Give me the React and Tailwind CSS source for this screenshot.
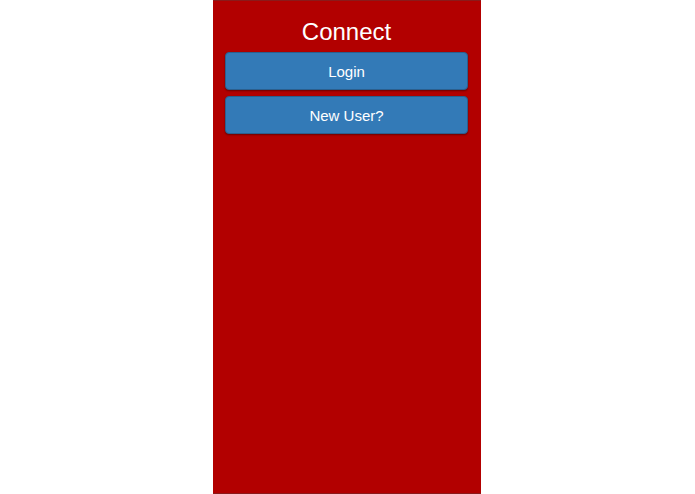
import React from 'react';

const App = () => {
    return (
        <div className="flex w-full h-[494px] bg-white font-['Liberation_Sans',Arial,sans-serif]">
            <div className="ml-[213px] w-[268px] h-full bg-[#b20000] border-t border-b border-[#8a1a1a] flex flex-col pl-3 pr-[13px]">
                <h1 className="text-white text-[24px] leading-none text-center mt-[19px] mb-[8px]">Connect</h1>
                <button className="h-[38px] w-full rounded-[4px] bg-[#337ab7] border border-[#2b5f8e] text-white text-[15px] pt-[2px] shadow-[0_1px_2px_rgba(0,0,0,0.4)]">
                    Login
                </button>
                <button className="mt-[6px] h-[38px] w-full rounded-[4px] bg-[#337ab7] border border-[#2b5f8e] text-white text-[15px] pt-[2px] shadow-[0_1px_2px_rgba(0,0,0,0.4)]">
                    New User?
                </button>
            </div>
        </div>
    );
};

export default App;
